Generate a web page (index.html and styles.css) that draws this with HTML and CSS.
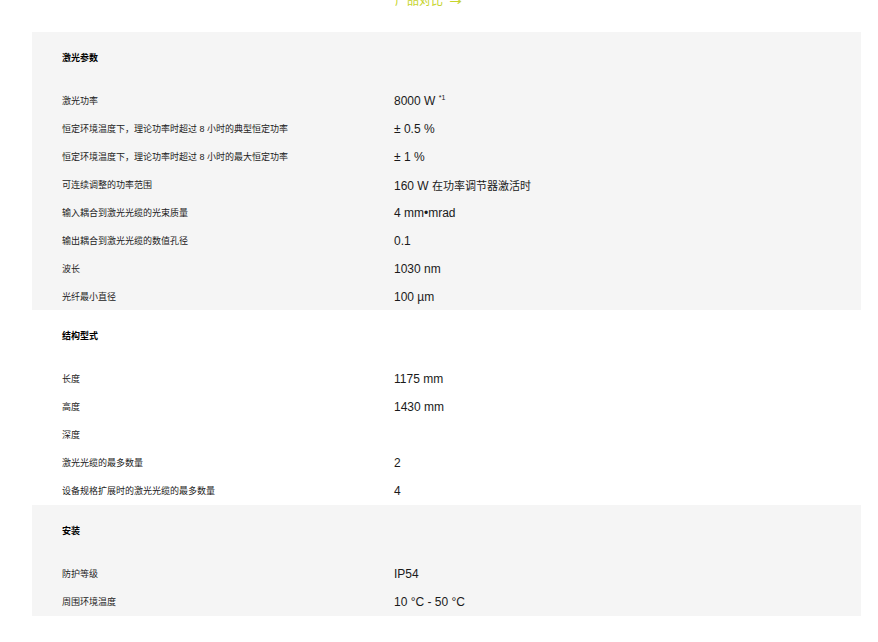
FILE: index.html
```html
<!DOCTYPE html>
<html lang="zh">
<head>
<meta charset="utf-8">
<link rel="stylesheet" href="styles.css">
</head>
<body>
<div class="page">
  <div class="compare">
    <span></span>
    <a class="compare-link" href="#">产品对比 <span class="arrow">→</span></a>
  </div>

  <section class="group gray">
    <h3 class="group-title">激光参数</h3>
    <div class="row"><div class="label">激光功率</div><div class="value">8000 W <sup>*1</sup></div></div>
    <div class="row"><div class="label">恒定环境温度下，理论功率时超过 8 小时的典型恒定功率</div><div class="value">± 0.5 %</div></div>
    <div class="row"><div class="label">恒定环境温度下，理论功率时超过 8 小时的最大恒定功率</div><div class="value">± 1 %</div></div>
    <div class="row"><div class="label">可连续调整的功率范围</div><div class="value">160 W <span class="cjk">在功率调节器激活时</span></div></div>
    <div class="row"><div class="label">输入耦合到激光光缆的光束质量</div><div class="value">4 mm•mrad</div></div>
    <div class="row"><div class="label">输出耦合到激光光缆的数值孔径</div><div class="value">0.1</div></div>
    <div class="row"><div class="label">波长</div><div class="value">1030 nm</div></div>
    <div class="row"><div class="label">光纤最小直径</div><div class="value">100 µm</div></div>
  </section>

  <section class="group">
    <h3 class="group-title">结构型式</h3>
    <div class="row"><div class="label">长度</div><div class="value">1175 mm</div></div>
    <div class="row"><div class="label">高度</div><div class="value">1430 mm</div></div>
    <div class="row"><div class="label">深度</div><div class="value"></div></div>
    <div class="row"><div class="label">激光光缆的最多数量</div><div class="value">2</div></div>
    <div class="row"><div class="label">设备规格扩展时的激光光缆的最多数量</div><div class="value">4</div></div>
  </section>

  <section class="group gray">
    <h3 class="group-title">安装</h3>
    <div class="row"><div class="label">防护等级</div><div class="value">IP54</div></div>
    <div class="row"><div class="label">周围环境温度</div><div class="value">10 °C - 50 °C</div></div>
  </section>
</div>
</body>
</html>
```

FILE: styles.css
```css
html, body {
  margin: 0;
  padding: 0;
  background: #ffffff;
}

body {
  font-family: "Liberation Sans", "Noto Sans CJK SC", sans-serif;
  color: #1a1a1a;
  overflow: hidden;
}

.page {
  margin: 0 17px 0 32px;
}

.compare {
  display: grid;
  grid-template-columns: 362px 1fr;
  margin-top: -7px;
  height: 16px;
  margin-bottom: 23px;
}

.compare-link {
  font-size: 12px;
  line-height: 16px;
  color: #c6d42e;
  text-decoration: none;
  margin-left: 1px;
}

.compare-link .arrow {
  display: inline-block;
  margin-left: 3px;
  font-family: "DejaVu Sans", sans-serif;
  transform: scaleX(1.25);
  transform-origin: left center;
}

.group {
  padding: 17px 0 0 30px;
}

.group.gray {
  background: #f5f5f5;
}

.group:nth-of-type(2) {
  padding-bottom: 1px;
}

.group:last-child {
  padding-bottom: 1px;
}

.group-title {
  margin: 0 0 18px 0;
  font-size: 9px;
  line-height: 19px;
  font-weight: bold;
  color: #000;
}

.row {
  display: grid;
  grid-template-columns: 332px 1fr;
  height: 28px;
  align-items: center;
}

.label {
  font-size: 9px;
  color: #222;
}

.value {
  font-size: 12px;
  color: #1a1a1a;
  padding-top: 2px;
}

.value .cjk {
  font-size: 11px;
}

.value sup {
  font-size: 7px;
  vertical-align: 5px;
  line-height: 0;
}
```
